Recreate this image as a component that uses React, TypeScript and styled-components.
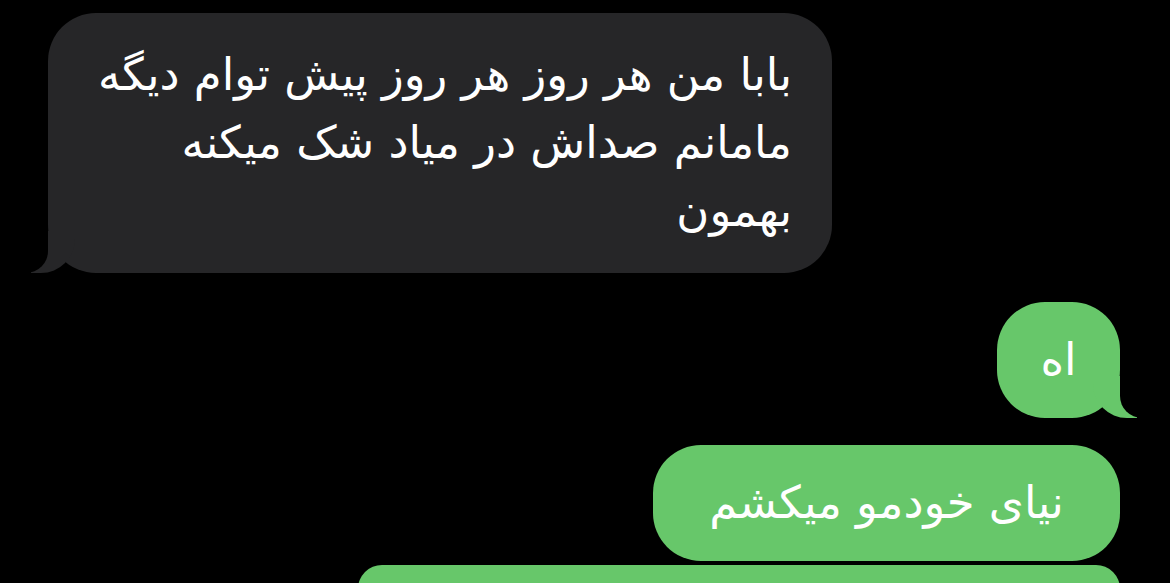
import styled, { createGlobalStyle } from 'styled-components';

const GlobalStyle = createGlobalStyle`
  html, body {
    margin: 0;
    padding: 0;
    background: #000;
    overflow: hidden;
  }
`;

const Thread = styled.div`
  display: flex;
  flex-direction: column;
  width: 1170px;
  height: 583px;
  padding: 13px 50px 0 48px;
  box-sizing: border-box;
  background: #000;
  overflow: hidden;
  font-family: 'DejaVu Sans', 'Noto Sans', sans-serif;
`;

const Bubble = styled.div<{ $sent?: boolean; $tail?: boolean; $gap?: number; $minWidth?: number }>`
  position: relative;
  align-self: ${(p) => (p.$sent ? 'flex-end' : 'flex-start')};
  margin-top: ${(p) => p.$gap ?? 0}px;
  min-width: ${(p) => p.$minWidth ?? 0}px;
  direction: rtl;
  text-align: ${(p) => (p.$sent ? 'center' : 'right')};
  background: ${(p) => (p.$sent ? '#67c76a' : '#262628')};
  color: #fff;
  font-size: 45px;
  line-height: 68px;
  white-space: nowrap;
  border-radius: 48px;
  padding: ${(p) => (p.$sent ? '24px 37px' : '28px 40px 28px 50px')};
  box-sizing: border-box;

  ${(p) =>
    p.$tail &&
    `
    &::before {
      content: '';
      position: absolute;
      bottom: 0;
      ${p.$sent ? 'right' : 'left'}: -17px;
      width: 44px;
      height: 42px;
      background: ${p.$sent ? '#67c76a' : '#262628'};
      ${p.$sent ? 'border-bottom-left-radius' : 'border-bottom-right-radius'}: 34px;
    }
    &::after {
      content: '';
      position: absolute;
      bottom: 0;
      ${p.$sent ? 'right' : 'left'}: -26px;
      width: 26px;
      height: 44px;
      background: #000;
      ${p.$sent ? 'border-bottom-left-radius' : 'border-bottom-right-radius'}: 22px;
    }
  `}
`;

const Filler = styled(Bubble)`
  width: 762px;
  height: 116px;
`;

export default function App() {
  return (
    <>
      <GlobalStyle />
      <Thread>
        <Bubble $tail>
          بابا من هر روز هر روز پیش توام دیگه
          <br />
          مامانم صداش در میاد شک میکنه
          <br />
          بهمون
        </Bubble>
        <Bubble $sent $tail $gap={29} $minWidth={123}>
          اه
        </Bubble>
        <Bubble $sent $gap={27} $minWidth={467}>
          نیای خودمو میکشم
        </Bubble>
        <Filler $sent $gap={4} />
      </Thread>
    </>
  );
}
